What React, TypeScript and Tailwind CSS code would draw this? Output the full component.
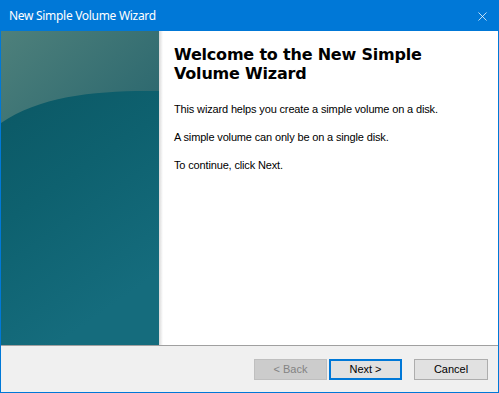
import { X } from "lucide-react";

const SidePanel = () => (
    <svg width="158" height="314" viewBox="0 0 158 314" preserveAspectRatio="none" className="block">
        <defs>
            <linearGradient id="topGlow" x1="0" y1="0" x2="1" y2="0.6">
                <stop offset="0" stopColor="#4e807b" />
                <stop offset="1" stopColor="#2f6a70" />
            </linearGradient>
            <linearGradient id="body" x1="0" y1="0" x2="0.35" y2="1">
                <stop offset="0" stopColor="#0a5460" />
                <stop offset="0.55" stopColor="#0e616f" />
                <stop offset="1" stopColor="#156c7d" />
            </linearGradient>
        </defs>
        <rect width="158" height="314" fill="url(#body)" />
        <path d="M0 0 H158 V60 C100 59 40 64 0 92 Z" fill="url(#topGlow)" />
    </svg>
);

export default function App() {
    return (
        <div className="w-[499px] h-[393px] border border-[#0078d7] bg-[#f0f0f0] flex flex-col overflow-hidden" style={{ fontFamily: '"Liberation Sans", Arial, sans-serif' }}>
            {/* title bar */}
            <div className="h-[30px] bg-[#0078d7] flex items-center justify-between pl-[8px] pr-[8px] shrink-0">
                <span className="text-white text-[12px] tracking-[-0.3px] font-['Noto_Sans',sans-serif]">New Simple Volume Wizard</span>
                <X size={15} strokeWidth={1.2} className="text-white" />
            </div>

            {/* body */}
            <div className="flex h-[314px] shrink-0 bg-white">
                <SidePanel />
                <div className="w-[4px] bg-gradient-to-r from-[#d9d9d9] to-white" />
                <div className="flex-1 pl-[11px] pt-[14px] text-black">
                    <h1 className="text-[16px] leading-[19px] font-bold font-['DejaVu_Sans',Verdana,sans-serif] tracking-[-0.2px]">
                        Welcome to the New Simple<br />Volume Wizard
                    </h1>
                    <div className="mt-[20px] flex flex-col gap-[15px] text-[11px] leading-[13px] tracking-[-0.15px]">
                        <p>This wizard helps you create a simple volume on a disk.</p>
                        <p>A simple volume can only be on a single disk.</p>
                        <p>To continue, click Next.</p>
                    </div>
                </div>
            </div>

            {/* footer */}
            <div className="border-t border-[#a0a0a0] flex-1 flex items-start justify-end pt-[13px] pr-[10px] text-[11px]">
                <button disabled className="w-[73px] h-[21px] border border-[#bfbfbf] bg-[#cccccc] text-[#838383]">&lt; Back</button>
                <button className="ml-[2px] w-[73px] h-[21px] border-2 border-[#0078d7] bg-[#e1e1e1] text-black">Next &gt;</button>
                <button className="ml-[12px] w-[74px] h-[21px] border border-[#adadad] bg-[#e1e1e1] text-black">Cancel</button>
            </div>
        </div>
    );
}
